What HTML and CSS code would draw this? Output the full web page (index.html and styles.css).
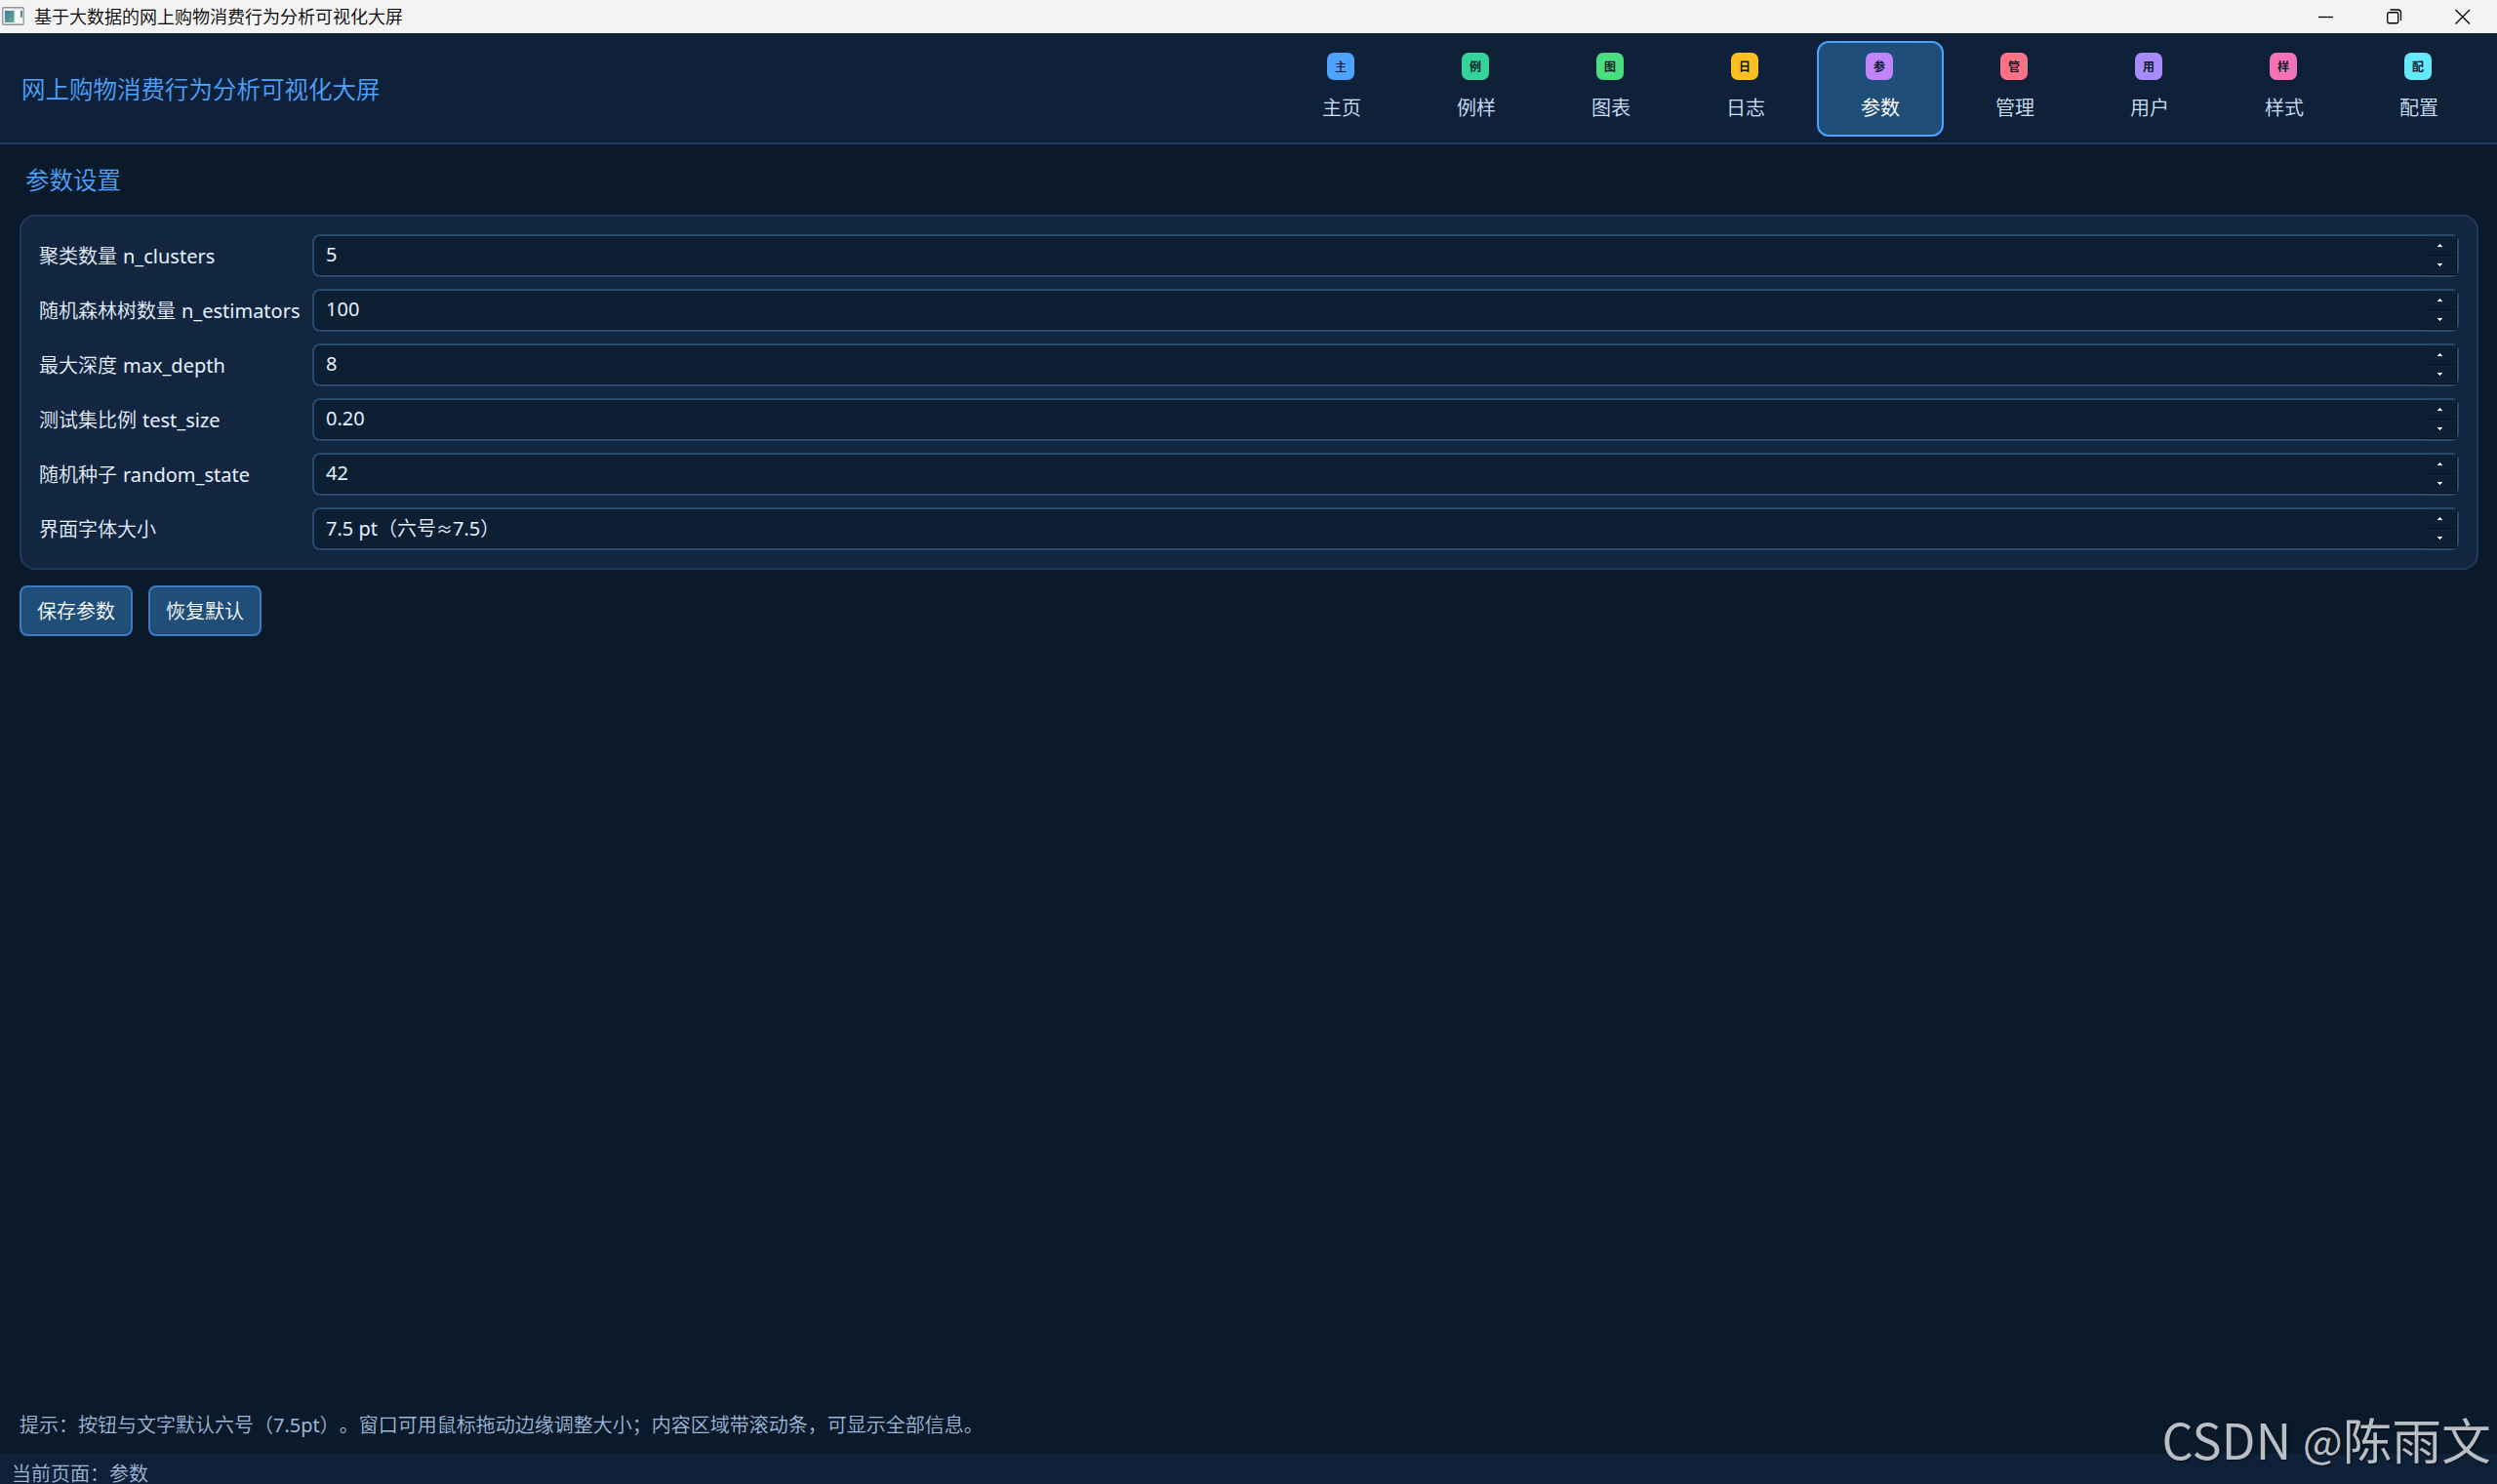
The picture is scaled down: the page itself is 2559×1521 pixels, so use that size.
FILE: index.html
```html
<!DOCTYPE html>
<html lang="zh-CN">
<head>
<meta charset="utf-8">
<title>基于大数据的网上购物消费行为分析可视化大屏</title>
<link rel="stylesheet" href="styles.css">
</head>
<body>
<div class="titlebar">
  <svg class="app-icon" width="24" height="20" viewBox="0 0 24 20">
    <defs><linearGradient id="pane" x1="0" y1="0" x2="1" y2="1"><stop offset="0" stop-color="#4679a8"/><stop offset="1" stop-color="#62b08a"/></linearGradient></defs>
    <rect x="0.75" y="0.75" width="21.5" height="17.5" rx="1" fill="#eceeef" stroke="#8f979d" stroke-width="1.3"/>
    <rect x="3" y="4" width="9.5" height="12" fill="url(#pane)"/>
    <rect x="14" y="4" width="4" height="7" fill="#fff"/>
    <rect x="19" y="4" width="2" height="7" fill="url(#pane)"/>
    <rect x="14" y="12" width="7" height="4" fill="#fafafa"/>
  </svg>
  <span class="window-title">基于大数据的网上购物消费行为分析可视化大屏</span>
  <div class="window-controls">
    <svg width="16" height="16" viewBox="0 0 16 16"><path d="M0 8.5H15" /></svg>
    <svg width="16" height="16" viewBox="0 0 16 16"><rect x="0.75" y="3.75" width="11" height="11" rx="1.5"/><path d="M3.5 1H11.5A3 3 0 0 1 14.5 4V12"/></svg>
    <svg width="16" height="16" viewBox="0 0 16 16"><path d="M0.5 1L15 15.5M15 1L0.5 15.5"/></svg>
  </div>
</div>
<header class="header">
  <h1 class="brand">网上购物消费行为分析可视化大屏</h1>
  <nav class="nav">
    <a class="tab"><span class="badge blue thin">主</span>主页</a>
    <a class="tab"><span class="badge teal">例</span>例样</a>
    <a class="tab"><span class="badge green">图</span>图表</a>
    <a class="tab"><span class="badge amber">日</span>日志</a>
    <a class="tab active"><span class="badge purple">参</span>参数</a>
    <a class="tab"><span class="badge red">管</span>管理</a>
    <a class="tab"><span class="badge violet">用</span>用户</a>
    <a class="tab"><span class="badge pink">样</span>样式</a>
    <a class="tab"><span class="badge cyan">配</span>配置</a>
  </nav>
</header>
<main class="page">
  <h2 class="page-title">参数设置</h2>
  <section class="card">
    <div class="row"><label>聚类数量 <span class="latin">n_clusters</span></label><div class="spin"><span class="value">5</span><span class="steps"><i class="up"></i><i class="down"></i></span></div></div>
    <div class="row"><label>随机森林树数量 <span class="latin">n_estimators</span></label><div class="spin"><span class="value">100</span><span class="steps"><i class="up"></i><i class="down"></i></span></div></div>
    <div class="row"><label>最大深度 <span class="latin">max_depth</span></label><div class="spin"><span class="value">8</span><span class="steps"><i class="up"></i><i class="down"></i></span></div></div>
    <div class="row"><label>测试集比例 <span class="latin">test_size</span></label><div class="spin"><span class="value">0.20</span><span class="steps"><i class="up"></i><i class="down"></i></span></div></div>
    <div class="row"><label>随机种子 <span class="latin">random_state</span></label><div class="spin"><span class="value">42</span><span class="steps"><i class="up"></i><i class="down"></i></span></div></div>
    <div class="row"><label>界面字体大小</label><div class="spin"><span class="value">7.5 pt<span class="cjk">（六号</span><span class="approx">≈</span>7.5<span class="cjk">）</span></span><span class="steps"><i class="up"></i><i class="down"></i></span></div></div>
  </section>
  <div class="actions">
    <button class="btn">保存参数</button>
    <button class="btn">恢复默认</button>
  </div>
  <p class="hint">提示：按钮与文字默认六号（<span class="latin">7.5pt</span>）。窗口可用鼠标拖动边缘调整大小；内容区域带滚动条，可显示全部信息。</p>
</main>
<footer class="statusbar">当前页面：参数</footer>
<div class="watermark">CSDN <span class="at">@</span>陈雨文</div>
</body>
</html>
```
FILE: styles.css
```css
* { box-sizing: border-box; }
body {
  margin: 0;
  width: 2559px;
  height: 1521px;
  overflow: hidden;
  display: flex;
  flex-direction: column;
  background: #0a1a2a;
  color: #e6f1ff;
  font: 350 20px/28px "Noto Sans CJK SC", sans-serif;
  text-spacing-trim: space-all;
  position: relative;
}
.titlebar {
  height: 34px;
  flex: none;
  display: flex;
  align-items: center;
  background: #f3f3f3;
  color: #000;
  padding-left: 2px;
}
.app-icon { margin-right: 9px; flex: none; }
.window-title { font-size: 18px; line-height: 30px; margin-top: -2px; }
.window-controls {
  margin-left: auto;
  display: flex;
  gap: 54px;
  padding-right: 27px;
}
.window-controls svg { fill: none; stroke: #000; stroke-width: 1.3; }
.header {
  height: 114px;
  flex: none;
  display: flex;
  justify-content: space-between;
  padding: 8px 15px 0 22px;
  background: #0f2138;
  border-bottom: 2px solid #1e3a5f;
}
.brand, .page-title {
  margin: 0;
  font-size: 24.5px;
  font-weight: 350;
  color: #4da3ff;
}
.brand { line-height: 98px; }
.nav { display: flex; gap: 8px; }
.tab {
  width: 130px;
  height: 98px;
  display: flex;
  flex-direction: column;
  align-items: center;
  gap: 14px;
  padding-top: 10px;
  border: 2px solid transparent;
  border-radius: 12px;
  color: #cfe3ff;
}
.tab.active { background: #1f4e79; border-color: #4da3ff; color: #fff; font-weight: 400; }
.badge {
  width: 28px;
  height: 28px;
  margin-right: 2px;
  border-radius: 7px;
  text-align: center;
  font-size: 12px;
  line-height: 27px;
  font-weight: 700;
  color: #0a1929;
}
.thin { font-weight: 500; }
.blue { background: #4da3ff; }
.teal { background: #34d399; }
.green { background: #4ade80; }
.amber { background: #fbbf24; }
.purple { background: #c084fc; }
.red { background: #fb7185; }
.violet { background: #a78bfa; }
.pink { background: #f472b6; }
.cyan { background: #67e8f9; }
.page {
  flex: 1;
  display: flex;
  flex-direction: column;
  padding: 18px 19px 15px 20px;
}
.page-title { line-height: 36px; padding-left: 6px; margin-bottom: 18px; }
.card {
  display: flex;
  flex-direction: column;
  gap: 12px;
  padding: 18px;
  background: #13263f;
  border: 2px solid #1e3a5f;
  border-radius: 16px;
}
.row { display: flex; height: 44px; align-items: center; }
.row label { width: 280px; flex: none; white-space: pre; word-spacing: 1.5px; }
.latin, .value { font-family: "Noto Sans", "Noto Sans CJK SC", sans-serif; font-weight: 400; }
.spin {
  flex: 1;
  height: 44px;
  display: flex;
  justify-content: space-between;
  padding-left: 12px;
  background: #0d1f33;
  border: 2px solid #2a4a70;
  border-radius: 8px;
}
.value { line-height: 38px; }
.cjk { font-family: "Noto Sans CJK SC", sans-serif; font-weight: 350; }
.approx { font-size: 17px; }
.steps { width: 32px; display: flex; flex-direction: column; }
.steps i {
  height: 20px;
  display: flex;
  justify-content: center;
  padding: 8px 2px 0 0;
  border: solid #050d16;
  border-width: 0 1px 1px 0;
  box-shadow: inset 1px 1px #10243a;
}
.steps i::before { content: ""; width: 5px; height: 3px; background: #e6f1ff; }
.up::before { clip-path: polygon(2px 0, 3px 0, 3px 1px, 4px 1px, 4px 2px, 5px 2px, 5px 3px, 0 3px, 0 2px, 1px 2px, 1px 1px, 2px 1px); }
.down::before { clip-path: polygon(0 0, 5px 0, 5px 1px, 4px 1px, 4px 2px, 3px 2px, 3px 3px, 2px 3px, 2px 2px, 1px 2px, 1px 1px, 0 1px); }
.actions { display: flex; gap: 16px; margin-top: 16px; }
.btn {
  width: 116px;
  height: 52px;
  padding: 0;
  font: 350 20px/28px "Noto Sans CJK SC", sans-serif;
  color: #fff;
  background: #1f4e79;
  border: 2px solid #3b7bbf;
  border-radius: 8px;
}
.hint { margin: auto 0 0; color: #9fb8d9; }
.statusbar {
  height: 31px;
  flex: none;
  padding: 9px 12px 0;
  line-height: 22px;
  background: #0f2138;
  color: #9fb8d9;
}
.watermark {
  position: absolute;
  right: 6px;
  bottom: 12px;
  font-size: 50.5px;
  font-weight: 400;
  line-height: 70px;
  letter-spacing: 0.2px;
  color: #b9bdc4;
  text-shadow: 1px 1px 2px #0008;
}
.at { font-size: 43px; vertical-align: 2px; line-height: 1; }
```
